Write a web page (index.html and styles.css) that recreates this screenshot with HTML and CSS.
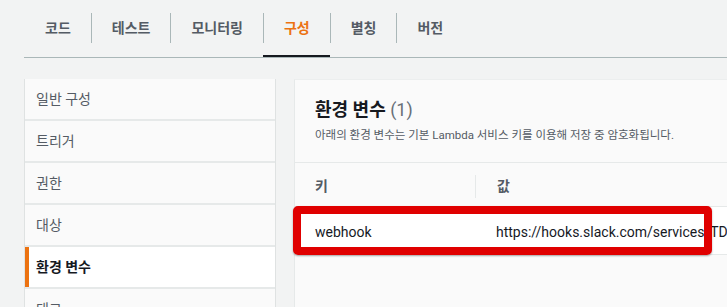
FILE: index.html
```html
<!DOCTYPE html>
<html lang="ko">
<head>
<meta charset="utf-8">
<title>환경 변수</title>
<link rel="stylesheet" href="styles.css">
</head>
<body>
<div class="page">
  <nav class="tabs">
    <div class="tab"><span class="tab-label">코드</span></div>
    <div class="tab"><span class="tab-label">테스트</span></div>
    <div class="tab"><span class="tab-label">모니터링</span></div>
    <div class="tab is-active"><span class="tab-label">구성</span></div>
    <div class="tab"><span class="tab-label">별칭</span></div>
    <div class="tab"><span class="tab-label">버전</span></div>
  </nav>
  <div class="layout">
    <ul class="side">
      <li class="side-item">일반 구성</li>
      <li class="side-item">트리거</li>
      <li class="side-item">권한</li>
      <li class="side-item">대상</li>
      <li class="side-item is-active">환경 변수</li>
      <li class="side-item">태그</li>
    </ul>
    <section class="panel">
      <header class="panel-head">
        <h2 class="panel-title">환경 변수 <span class="count">(1)</span></h2>
        <p class="panel-desc">아래의 환경 변수는 기본 Lambda 서비스 키를 이용해 저장 중 암호화됩니다.</p>
      </header>
      <div class="thead">
        <div class="th col-key">키</div>
        <div class="th col-val"><span class="th-inner">값</span></div>
      </div>
      <div class="tr">
        <div class="td col-key">webhook</div>
        <div class="td col-val">https://hooks.slack.com/services/TDXXXXXXX/BXXXXXXXX/XXXXXXXXXXXXXXXX</div>
        <div class="highlight"></div>
      </div>
    </section>
  </div>
</div>
</body>
</html>
```
FILE: styles.css
```css
* { box-sizing: border-box; }

html, body {
  margin: 0;
  padding: 0;
}

body {
  width: 727px;
  height: 307px;
  overflow: hidden;
  background: #f2f3f3;
  font-family: Roboto, "Noto Sans CJK KR", sans-serif;
  font-feature-settings: "palt";
  color: #16191f;
}

.page {
  padding-left: 24px;
}

/* Tabs */
.tabs {
  display: flex;
  border-bottom: 1px solid #aab7b8;
  height: 58px;
}

.tab {
  height: 57px;
  padding-top: 13px;
  border-bottom: 2px solid transparent;
}

.tab-label {
  display: block;
  height: 30px;
  line-height: 30px;
  padding: 0 20px;
  border-left: 1px solid #aab7b8;
  font-size: 14px;
  font-weight: 700;
  color: #545b64;
}

.tab:first-child .tab-label {
  border-left-color: transparent;
}

.tab.is-active {
  border-bottom-color: #16191f;
}

.tab.is-active .tab-label {
  color: #ec7211;
}

/* Layout */
.layout {
  display: flex;
  gap: 18px;
  margin-top: 21px;
}

/* Side navigation */
.side {
  list-style: none;
  margin: 0;
  padding: 0;
  width: 252px;
  flex: none;
  display: flex;
  flex-direction: column;
  gap: 2px;
  background: #e6e9e9;
  border-left: 1px solid #dfe2e2;
  border-right: 1px solid #dfe2e2;
}

.side-item {
  height: 40px;
  line-height: 40px;
  padding-left: 11px;
  font-size: 14px;
  color: #545b64;
  background: #fafafa;
}

.side-item.is-active {
  background: #ffffff;
  color: #16191f;
  font-weight: 700;
  box-shadow: inset 4px 0 0 #ec7211;
}

/* Panel */
.panel {
  flex: 1;
  min-width: 0;
  background: #fafafa;
  border-left: 1px solid #e6e9e9;
  border-top: 1px solid #eceeee;
}

.panel-head {
  padding: 19px 21px 19px 20px;
  border-bottom: 1px solid #e6e9e9;
}

.panel-title {
  margin: 0;
  font-size: 18px;
  line-height: 22px;
  font-weight: 700;
  color: #16191f;
}

.count {
  font-weight: 400;
  color: #687078;
}

.panel-desc {
  margin: 6px 0 0;
  font-size: 11.5px;
  line-height: 16px;
  color: #545b64;
  white-space: nowrap;
}

.thead {
  display: flex;
}

.th {
  padding: 13px 0 10px 20px;
  height: 43px;
  font-size: 14px;
  line-height: 20px;
  font-weight: 700;
  color: #545b64;
}

.col-key {
  width: 180px;
  flex: none;
}

.col-val {
  flex: 1;
  white-space: nowrap;
}

.th.col-val {
  padding: 12px 0 8px 0;
}

.th-inner {
  display: block;
  height: 23px;
  line-height: 23px;
  padding-left: 21px;
  border-left: 1px solid #e6e9e9;
}

.tr {
  position: relative;
  display: flex;
  background: #ffffff;
  border-top: 1px solid #e6e9e9;
  border-bottom: 1px solid #e6e9e9;
}

.td {
  padding: 15px 0 12px 20px;
  font-size: 14px;
  line-height: 20px;
  color: #16191f;
}

.td.col-val {
  padding-left: 21px;
}

.highlight {
  position: absolute;
  left: -2px;
  top: -1px;
  width: 419px;
  height: 49px;
  border: 8px solid #e00000;
  border-radius: 5px;
  box-shadow: 0 1px 2px rgba(0, 0, 0, 0.35);
}
```
